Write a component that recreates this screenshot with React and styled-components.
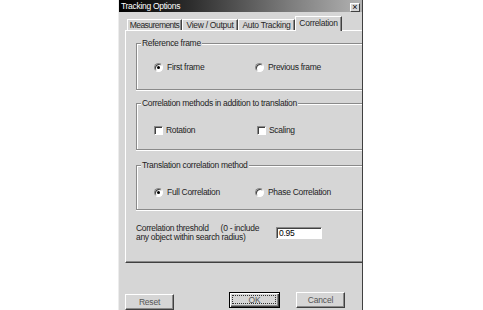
import React from "react";
import styled, { createGlobalStyle, css } from "styled-components";

const Global = createGlobalStyle`
  html, body { margin: 0; padding: 0; background: #fff; overflow: hidden; height: 100%; }
  body { font-family: "Liberation Sans", Arial, sans-serif; }
  * { box-sizing: border-box; }
`;

const face = css`
  background-color: #d6d6d6;
`;

const Page = styled.div`
  display: flex;
  padding-left: 118px;
`;

const Dialog = styled.div`
  ${face};
  width: 245px;
  height: 310px;
  border-left: 1px solid #ececec;
  border-right: 1px solid #404040;
  overflow: hidden;
  display: flex;
  flex-direction: column;
`;

const TitleBar = styled.div`
  height: 12px;
  flex: none;
  display: flex;
  align-items: center;
  padding: 0 2px 0 2px;
  background: linear-gradient(to right, #000 0%, #2e2e2e 30%, #7c7c7c 70%, #b2b2b2 100%);
`;

const TitleText = styled.span`
  color: #fff;
  font-size: 8.5px;
  letter-spacing: -0.3px;
  line-height: 11px;
`;

const CloseBtn = styled.span`
  margin-left: auto;
  margin-top: 3px;
  width: 10px;
  height: 9px;
  background: #d6d6d6;
  border: 1px solid;
  border-color: #fff #404040 #404040 #fff;
  color: #000;
  font-size: 9px;
  line-height: 6px;
  text-align: center;
`;

const Body = styled.div`
  flex: 1;
  display: flex;
  flex-direction: column;
  padding-left: 6px;
`;

const TabStrip = styled.div`
  display: flex;
  align-items: flex-end;
  height: 14px;
  margin-top: 4px;
  padding-left: 2px;
  position: relative;
  z-index: 1;
`;

const Tab = styled.div`
  ${face};
  width: ${(p) => p.$w}px;
  height: ${(p) => (p.$active ? 15 : 11)}px;
  margin-bottom: ${(p) => (p.$active ? -1 : 0)}px;
  border-top: 1px solid #fff;
  border-left: 1px solid #fff;
  border-right: 1px solid #404040;
  box-shadow: inset -1px 0 0 #8a8a8a;
  display: flex;
  align-items: center;
  justify-content: center;
  font-size: 8.5px;
  letter-spacing: ${(p) => (p.$tight ? -0.55 : -0.3)}px;
  color: #262626;
  white-space: nowrap;
  padding-bottom: ${(p) => (p.$active ? 2 : 0)}px;
`;

const Panel = styled.div`
  height: 233px;
  flex: none;
  margin-right: -40px;
  border-top: 1px solid #fff;
  border-left: 1px solid #fff;
  border-bottom: 1px solid #404040;
  box-shadow: inset 0 -1px 0 #8a8a8a;
  padding-left: 10px;
  display: flex;
  flex-direction: column;
`;

const Group = styled.div`
  position: relative;
  flex: none;
  margin-top: ${(p) => p.$mt}px;
  height: ${(p) => p.$h}px;
  padding-top: ${(p) => p.$pt}px;
  padding-left: 17px;
  border: 1px solid #8a8a8a;
  border-right: none;
  box-shadow: inset 1px 1px 0 #fff, 0 1px 0 #fff;
  display: flex;
  align-items: flex-start;
`;

const GroupLabel = styled.span`
  ${face};
  position: absolute;
  top: -6px;
  left: 4px;
  padding: 0 1px;
  font-size: 8.5px;
  letter-spacing: -0.3px;
  line-height: 11px;
  color: #1e1e1e;
  white-space: nowrap;
`;

const Option = styled.label`
  display: flex;
  align-items: center;
  width: ${(p) => p.$w}px;
  height: 9px;
`;

const Radio = styled.span`
  position: relative;
  width: 9px;
  height: 9px;
  flex: none;
  border-radius: 50%;
  border: 1px solid;
  border-color: #8a8a8a #fff #fff #8a8a8a;
  background: #fff;
  box-shadow: inset 1px 1px 0 #404040;
  ${(p) =>
    p.$checked &&
    css`
      &::after {
        content: "";
        position: absolute;
        left: 2px;
        top: 2px;
        width: 3px;
        height: 3px;
        border-radius: 50%;
        background: #000;
      }
    `}
`;

const Check = styled.span`
  width: 9px;
  height: 9px;
  flex: none;
  border: 1px solid;
  border-color: #8a8a8a #fff #fff #8a8a8a;
  background: #fff;
  box-shadow: inset 1px 1px 0 #404040;
`;

const OptText = styled.span`
  margin-left: ${(p) => p.$gap}px;
  font-size: 8.5px;
  letter-spacing: -0.3px;
  line-height: 9px;
  color: #1e1e1e;
  white-space: nowrap;
`;

const ThresholdRow = styled.div`
  display: flex;
  align-items: flex-start;
  margin-top: 14px;
`;

const ThresholdLabel = styled.div`
  width: 140px;
  font-size: 8.5px;
  letter-spacing: -0.3px;
  line-height: 9px;
  color: #1e1e1e;
  white-space: nowrap;
`;

const Gap = styled.span`
  display: inline-block;
  width: ${(p) => p.$w}px;
`;

const TextBox = styled.div`
  margin-top: 3px;
  width: 46px;
  height: 12px;
  background: #fff;
  border: 1px solid;
  border-color: #8a8a8a #fff #fff #8a8a8a;
  box-shadow: inset 1px 1px 0 #404040;
  font-size: 8.5px;
  letter-spacing: -0.3px;
  line-height: 10px;
  padding-left: 2px;
  color: #000;
`;

const Footer = styled.div`
  display: flex;
  align-items: flex-start;
  gap: 16px;
  padding-top: 29px;
  padding-right: 17px;
`;

const Button = styled.div`
  position: relative;
  width: ${(p) => p.$w}px;
  height: 16px;
  margin-top: ${(p) => p.$mt || 0}px;
  display: flex;
  align-items: center;
  justify-content: center;
  font-size: 8.5px;
  letter-spacing: -0.2px;
  color: #555;
  border: 1px solid;
  border-color: #fff #404040 #404040 #fff;
  box-shadow: inset -1px -1px 0 #8a8a8a;
  ${(p) => p.$push && "margin-right: auto;"}
  ${(p) =>
    p.$default &&
    css`
      border: 1px solid #000;
      box-shadow: inset 1px 1px 0 #fff, inset -1px -1px 0 #404040, inset -2px -2px 0 #8a8a8a;
      &::before {
        content: "";
        position: absolute;
        inset: 2px 3px 3px 2px;
        border: 1px dotted #303030;
      }
    `}
`;

const ButtonText = styled.span`
  position: relative;
`;

export default function App() {
  return (
    <>
      <Global />
      <Page>
        <Dialog>
          <TitleBar>
            <TitleText>Tracking Options</TitleText>
            <CloseBtn>×</CloseBtn>
          </TitleBar>
          <Body>
            <TabStrip>
              <Tab $w={55} $tight>Measurements</Tab>
              <Tab $w={56}>View / Output</Tab>
              <Tab $w={57}>Auto Tracking</Tab>
              <Tab $w={47} $active>Correlation</Tab>
            </TabStrip>
            <Panel>
              <Group $mt={12} $h={47} $pt={19}>
                <GroupLabel>Reference frame</GroupLabel>
                <Option $w={101}>
                  <Radio $checked />
                  <OptText $gap={4}>First frame</OptText>
                </Option>
                <Option $w={101}>
                  <Radio />
                  <OptText $gap={4}>Previous frame</OptText>
                </Option>
              </Group>
              <Group $mt={13} $h={47} $pt={22}>
                <GroupLabel>Correlation methods in addition to translation</GroupLabel>
                <Option $w={103}>
                  <Check />
                  <OptText $gap={3}>Rotation</OptText>
                </Option>
                <Option $w={103}>
                  <Check />
                  <OptText $gap={3}>Scaling</OptText>
                </Option>
              </Group>
              <Group $mt={15} $h={45} $pt={22}>
                <GroupLabel>Translation correlation method</GroupLabel>
                <Option $w={101}>
                  <Radio $checked />
                  <OptText $gap={4}>Full Correlation</OptText>
                </Option>
                <Option $w={101}>
                  <Radio />
                  <OptText $gap={4}>Phase Correlation</OptText>
                </Option>
              </Group>
              <ThresholdRow>
                <ThresholdLabel>
                  Correlation threshold<Gap $w={12} />(0 - include
                  <br />
                  any object within search radius)
                </ThresholdLabel>
                <TextBox>0.95</TextBox>
              </ThresholdRow>
            </Panel>
            <Footer>
              <Button $w={49} $mt={2} $push><ButtonText>Reset</ButtonText></Button>
              <Button $w={51} $default><ButtonText>OK</ButtonText></Button>
              <Button $w={49}><ButtonText>Cancel</ButtonText></Button>
            </Footer>
          </Body>
        </Dialog>
      </Page>
    </>
  );
}
